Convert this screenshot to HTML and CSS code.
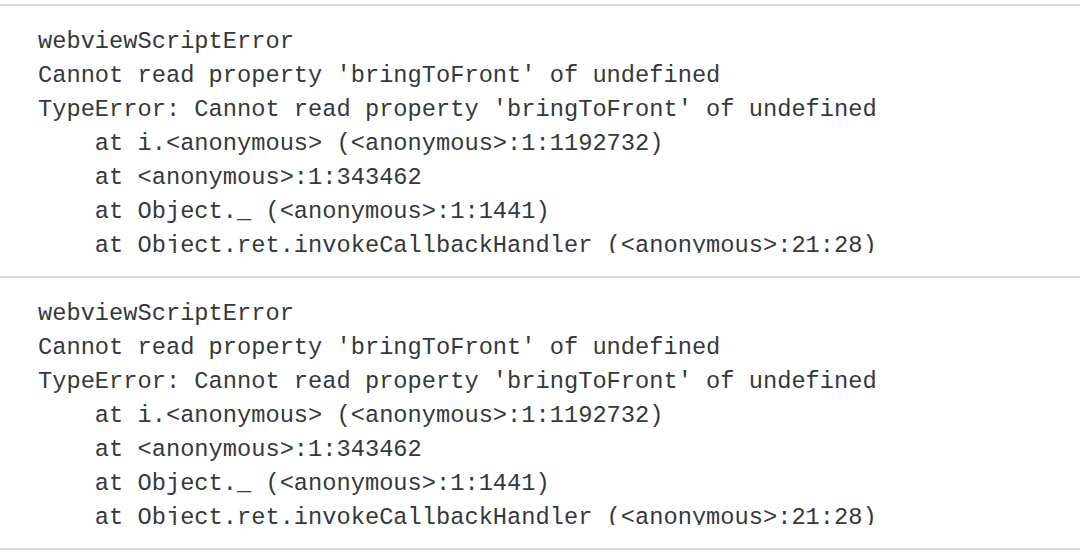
FILE: index.html
```html
<!DOCTYPE html>
<html>
<head>
<meta charset="utf-8">
<link rel="stylesheet" href="styles.css">
</head>
<body>
<div class="log">
  <div class="entry"><pre class="trace">webviewScriptError
Cannot read property 'bringToFront' of undefined
TypeError: Cannot read property 'bringToFront' of undefined
    at i.&lt;anonymous&gt; (&lt;anonymous&gt;:1:1192732)
    at &lt;anonymous&gt;:1:343462
    at Object._ (&lt;anonymous&gt;:1:1441)
    at Object.ret.invokeCallbackHandler (&lt;anonymous&gt;:21:28)
    at Object.ret.invokeCallback (&lt;anonymous&gt;:21:28)</pre></div>
  <div class="entry"><pre class="trace">webviewScriptError
Cannot read property 'bringToFront' of undefined
TypeError: Cannot read property 'bringToFront' of undefined
    at i.&lt;anonymous&gt; (&lt;anonymous&gt;:1:1192732)
    at &lt;anonymous&gt;:1:343462
    at Object._ (&lt;anonymous&gt;:1:1441)
    at Object.ret.invokeCallbackHandler (&lt;anonymous&gt;:21:28)
    at Object.ret.invokeCallback (&lt;anonymous&gt;:21:28)</pre></div>
</div>
</body>
</html>
```
FILE: styles.css
```css
html, body {
  margin: 0;
  padding: 0;
  background: #ffffff;
}
.log {
  padding-top: 4px;
}
.entry {
  border-top: 2px solid #d5d9e6;
  padding: 19px 0 23px 38px;
}
.entry:last-child {
  border-bottom: 2px solid #d5d9e6;
}
.trace {
  margin: 0;
  height: 228px;
  overflow: hidden;
  font-family: "Liberation Mono", "DejaVu Sans Mono", monospace;
  font-size: 23.7px;
  line-height: 34px;
  color: #35383c;
  white-space: pre;
}
```
